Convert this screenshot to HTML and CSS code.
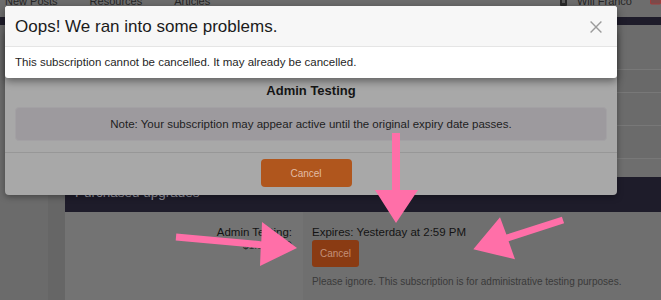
FILE: index.html
```html
<!DOCTYPE html>
<html lang="en">
<head>
<meta charset="utf-8">
<title>Subscription</title>
<link rel="stylesheet" href="styles.css">
</head>
<body>
<div class="page">
  <header class="topnav">
    <nav class="nav-left">
      <span>New Posts</span>
      <span>Resources</span>
      <span>Articles</span>
    </nav>
    <div class="nav-user">
      <svg class="user-ico" width="7" height="8" viewBox="0 0 7 8"><rect x="0" y="0" width="7" height="8" rx="1" fill="#2a2a2a"/><rect x="2" y="2" width="3" height="3" fill="#5a5a5a"/></svg>
      <span class="user-name">Will Franco</span>
      <svg class="alert-ico" width="11" height="7" viewBox="0 0 11 7"><rect x="0.5" y="0" width="10" height="5" rx="1" fill="#7a4a4a" stroke="#a03c3c"/></svg>
    </div>
  </header>
  <div class="navy-strip"></div>
  <div class="layout">
    <aside class="side"></aside>
    <aside class="side2"></aside>
    <main class="main">
      <div class="rows">
        <div class="row r1"></div>
        <div class="row r2"></div>
        <div class="row r3"></div>
        <div class="row r4"></div>
        <div class="row r5"></div>
      </div>
      <section class="block">
        <h2 class="block-head">Purchased upgrades</h2>
        <div class="block-body">
          <div class="label-col">
            <div class="label">Admin Testing:</div>
            <div class="price">$1.00 USD</div>
          </div>
          <div class="value-col">
            <div class="expires">Expires: Yesterday at 2:59 PM</div>
            <button class="btn-dark">Cancel</button>
            <p class="hint">Please ignore. This subscription is for administrative testing purposes.</p>
          </div>
        </div>
      </section>
    </main>
  </div>

  <div class="dlg-back">
    <div class="dlg-back-body">
      <h3 class="dlg-back-title">Admin Testing</h3>
      <div class="note">Note: Your subscription may appear active until the original expiry date passes.</div>
    </div>
    <div class="dlg-back-foot">
      <button class="btn-orange">Cancel</button>
    </div>
  </div>

  <div class="dlg-front">
    <div class="dlg-head">
      <h1 class="dlg-title">Oops! We ran into some problems.</h1>
      <svg class="close" width="12" height="12" viewBox="0 0 12 12"><path d="M0.6 0.6 L11.4 11.4 M11.4 0.6 L0.6 11.4" stroke="#9b9b9b" stroke-width="1.4" fill="none"/></svg>
    </div>
    <div class="dlg-msg">This subscription cannot be cancelled. It may already be cancelled.</div>
  </div>

  <svg class="arrows" width="661" height="300" viewBox="0 0 661 300">
    <polygon fill="#ff6fa8" points="392,133 400,133 400,190 418,190 396,223 375,190 392,190"/>
    <polygon fill="#ff6fa8" points="176.3,233.5 261.3,241.2 262,222 297,248 260,266 260.7,248.2 175.7,240.5"/>
    <polygon fill="#ff6fa8" points="561.9,216.7 506.4,234.6 500,217.3 473.3,249.3 515,259.3 508.6,241.2 564.1,223.3"/>
  </svg>
</div>
</body>
</html>
```

FILE: styles.css
```css
* { box-sizing: border-box; margin: 0; padding: 0; }
html, body { width: 661px; height: 300px; overflow: hidden; }
body {
  font-family: "Liberation Sans", Arial, Helvetica, sans-serif;
  background: #6c6c6c;
  color: #1d1d1d;
}
.page { position: relative; width: 661px; height: 300px; overflow: hidden; }

/* top navigation (dimmed by overlay) */
.topnav {
  height: 17px;
  display: flex;
  align-items: flex-start;
  background: #6d6d6d;
  font-size: 11px;
  line-height: 13px;
  color: #262626;
  padding-left: 5px;
}
.nav-left { display: flex; gap: 32px; margin-top: -5px; }
.nav-user { margin-left: auto; display: flex; align-items: flex-start; margin-top: -5px; }
.user-ico { margin-top: 3px; margin-right: 10px; }
.user-name { margin-right: 18px; }
.alert-ico { margin-top: 4px; }

.navy-strip { height: 8px; background: #1e1c2a; }

.layout { display: flex; height: 275px; }
.side { width: 48px; background: #6b6b6b; }
.side2 { width: 17px; background: #666666; }
.main { flex: 1; display: flex; flex-direction: column; background: #6d6d6d; }

.rows { height: 152px; display: flex; flex-direction: column; }
.row { border-bottom: 1px solid #787878; }
.r1 { height: 45px; background: #6c6c6c; }
.r2 { height: 23px; background: #696969; }
.r3 { height: 33px; background: #6b6b6b; }
.r4 { height: 33px; background: #6b6b6b; }
.r5 { flex: 1; border-bottom: 0; background: #6e6e6e; }

.block { flex: 1; display: flex; flex-direction: column; }
.block-head {
  height: 35px;
  background: #1e1c2a;
  color: #9b9aa5;
  font-size: 13.5px;
  font-weight: normal;
  line-height: 16px;
  padding: 8px 10px 0;
}
.block-body { flex: 1; display: grid; grid-template-columns: 238px 1fr; }
.label-col {
  background: #737373;
  text-align: right;
  padding: 13px 11px 0 0;
  color: #141414;
}
.label { font-size: 11.5px; line-height: 14px; }
.price { font-size: 10px; line-height: 13px; color: #2e2e2e; }
.value-col { background: #6f6f6f; padding: 13px 0 0 9px; }
.expires { font-size: 11.5px; line-height: 14px; color: #141414; }
.btn-dark {
  display: block;
  margin-top: 1px;
  width: 47px;
  height: 27px;
  border: 0;
  border-radius: 3px;
  background: #8a3b13;
  color: #c49078;
  font-family: inherit;
  font-size: 10px;
}
.hint { margin-top: 8px; font-size: 10px; line-height: 13px; color: #3a3a3a; }

/* background dialog (dimmed) */
.dlg-back {
  position: absolute;
  left: 5px;
  top: 30px;
  width: 612px;
  height: 165px;
  background: #a8a8a8;
  border-radius: 4px;
  box-shadow: 0 2px 6px rgba(0, 0, 0, 0.35);
}
.dlg-back-body { padding: 53px 10px 11px; }
.dlg-back-title {
  font-size: 13px;
  font-weight: bold;
  line-height: 16px;
  text-align: center;
  color: #151515;
  margin-bottom: 8px;
}
.note {
  height: 34px;
  background: #9d9a9e;
  border: 1px solid #a3a1a4;
  border-radius: 4px;
  font-size: 11.5px;
  line-height: 14px;
  padding: 9px 10px;
  text-align: center;
  color: #1e1e1e;
}
.dlg-back-foot {
  border-top: 1px solid #979797;
  padding: 6px 10px 8px 0;
  display: flex;
  justify-content: center;
}
.btn-orange {
  width: 91px;
  height: 28px;
  border: 0;
  border-radius: 4px;
  background: #b0561d;
  color: #e2bca4;
  font-family: inherit;
  font-size: 10px;
}

/* foreground error dialog */
.dlg-front {
  position: absolute;
  left: 5px;
  top: 6px;
  width: 612px;
  background: #ffffff;
  border-radius: 3px;
  box-shadow: 0 3px 9px rgba(0, 0, 0, 0.45);
}
.dlg-head {
  display: flex;
  align-items: center;
  justify-content: space-between;
  padding: 11px 15px 9px 10px;
  background: #f7f7f7;
  border-bottom: 1px solid #e5e5e5;
  border-radius: 3px 3px 0 0;
}
.dlg-title { font-size: 17px; line-height: 20px; font-weight: normal; color: #1b1b1b; }
.close { display: block; }
.dlg-msg { padding: 8px 10px 9px; font-size: 11.5px; line-height: 14px; color: #1f1f1f; }

.arrows { position: absolute; left: 0; top: 0; pointer-events: none; }
```
